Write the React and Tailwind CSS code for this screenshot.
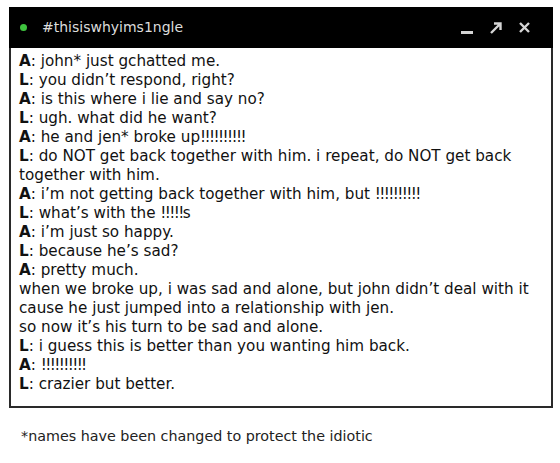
import React from "react";

const lines = [
  ["A", "john* just gchatted me."],
  ["L", "you didn’t respond, right?"],
  ["A", "is this where i lie and say no?"],
  ["L", "ugh. what did he want?"],
  ["A", "he and jen* broke up!!!!!!!!!!"],
  ["L", "do NOT get back together with him. i repeat, do NOT get back together with him."],
  ["A", "i’m not getting back together with him, but !!!!!!!!!!"],
  ["L", "what’s with the !!!!!s"],
  ["A", "i’m just so happy."],
  ["L", "because he’s sad?"],
  ["A", "pretty much."],
  [null, "when we broke up, i was sad and alone, but john didn’t deal with it cause he just jumped into a relationship with jen."],
  [null, "so now it’s his turn to be sad and alone."],
  ["L", "i guess this is better than you wanting him back."],
  ["A", "!!!!!!!!!!"],
  ["L", "crazier but better."],
];

function Text({ text }) {
  const parts = text.split(/(!{2,})/);
  return parts.map((p, i) =>
    /^!{2,}$/.test(p) ? (
      <span key={i} className="tracking-[-1.6px]">{p}</span>
    ) : (
      <React.Fragment key={i}>{p}</React.Fragment>
    )
  );
}

export default function App() {
  return (
    <div className="w-[560px] h-[463px] bg-white pt-[7px] pl-[9px]" style={{ fontFamily: '"DejaVu Sans", sans-serif' }}>
      <div className="w-[544px]">
        <div className="h-[41px] bg-black flex items-center pl-[11px] pr-[22px]">
          <span className="w-[7px] h-[7px] rounded-full bg-[#3fc33f]"></span>
          <span className="ml-[15px] text-[14px] text-[#dcdcdc]">#thisiswhyims1ngle</span>
          <div className="ml-auto flex items-center gap-[15px] text-[#d4d4d4]">
            <svg width="13" height="14" viewBox="0 0 13 14"><rect x="0" y="10" width="12" height="3" fill="currentColor" /></svg>
            <svg width="14" height="14" viewBox="0 0 14 14"><path d="M2 12 L11 3 M5 2.5 H11.5 V9" stroke="currentColor" strokeWidth="2.4" fill="none" /></svg>
            <svg width="13" height="13" viewBox="0 0 13 13"><path d="M2 2 L11 11 M11 2 L2 11" stroke="currentColor" strokeWidth="2.4" fill="none" /></svg>
          </div>
        </div>
        <div className="border-2 border-t-0 border-[#2a2a2a] pl-[8px] pr-[10px] pt-[4px] pb-[12px] text-[15.2px] leading-[19px] text-[#111]">
          {lines.map(([who, text], i) => (
            <div key={i}>
              {who && <b>{who}</b>}
              {who && ": "}
              <Text text={text} />
            </div>
          ))}
        </div>
      </div>
      <div className="mt-[18px] pl-[12px] text-[14.3px] text-[#222]">*names have been changed to protect the idiotic</div>
    </div>
  );
}
